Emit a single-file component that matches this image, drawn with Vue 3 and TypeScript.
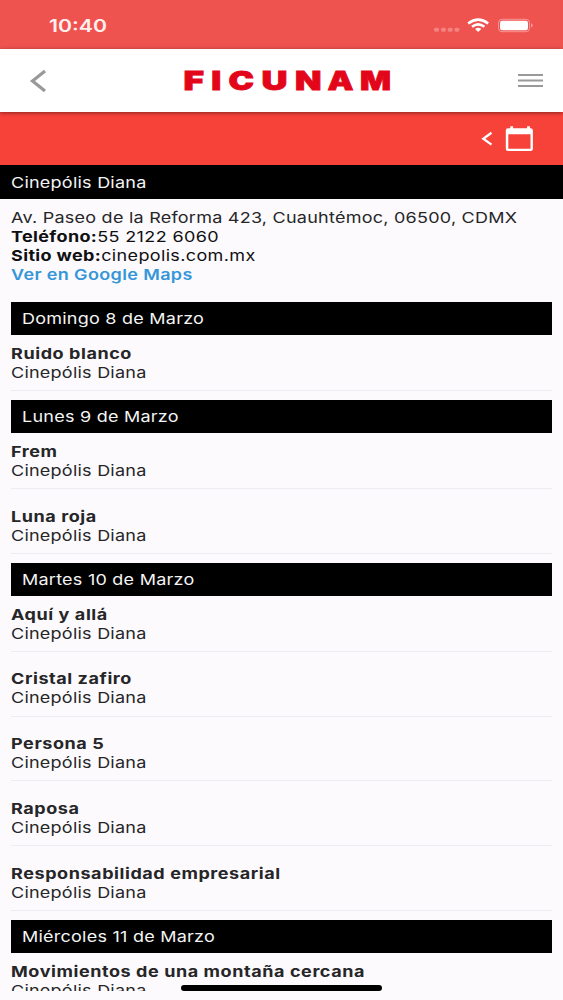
<script setup lang="ts">
interface Day {
  label: string
  films: string[]
}

const venue = 'Cinepólis Diana'

const days: Day[] = [
  { label: 'Domingo 8 de Marzo', films: ['Ruido blanco'] },
  { label: 'Lunes 9 de Marzo', films: ['Frem', 'Luna roja'] },
  {
    label: 'Martes 10 de Marzo',
    films: ['Aquí y allá', 'Cristal zafiro', 'Persona 5', 'Raposa', 'Responsabilidad empresarial'],
  },
  { label: 'Miércoles 11 de Marzo', films: ['Movimientos de una montaña cercana'] },
]

const logo = [
  { char: 'F', x: 0.5, width: 20.5 },
  { char: 'I', x: 28.2, width: 10 },
  { char: 'C', x: 45.5, width: 25.5 },
  { char: 'U', x: 78.5, width: 26 },
  { char: 'N', x: 112, width: 26.5 },
  { char: 'A', x: 144.5, width: 26 },
  { char: 'M', x: 177, width: 31 },
]
</script>

<template>
  <div class="screen">
    <div class="status">
      <span class="clock">10:40</span>
      <svg class="indicators" width="102" height="20" viewBox="0 0 102 20">
        <g fill="#fff" opacity="0.28">
          <rect x="1" y="10.700" width="5" height="4" rx="1.6" />
          <rect x="8" y="10.700" width="5" height="4" rx="1.6" />
          <rect x="14.700" y="10.700" width="5" height="4" rx="1.6" />
          <rect x="21.400" y="10.700" width="5" height="4" rx="1.6" />
        </g>
        <g fill="none" stroke="#fff" stroke-width="2.5">
          <path d="M35.200 6.500 Q45.200 -1.300 55.200 6.500" />
          <path d="M39 9.800 Q45.200 5 51.400 9.800" />
        </g>
        <path d="M42.100 12 Q45.200 9.700 48.300 12 L45.200 15Z" fill="#fff" />
        <rect x="65.500" y="2.300" width="31" height="12.400" rx="3.500" fill="none" stroke="#fff" stroke-opacity="0.4" />
        <rect x="67" y="3.800" width="28" height="9.400" rx="2.200" fill="#fff" />
        <path d="M98.200 6.300 Q101.200 8.400 98.200 10.600Z" fill="#fff" fill-opacity="0.5" />
      </svg>
    </div>

    <header class="header">
      <svg class="back" width="18" height="24" viewBox="0 0 18 24">
        <path d="M17 2 L4.500 12 L17 22" fill="none" stroke="#999" stroke-width="3.2" />
      </svg>
      <svg class="logo" width="216" height="44" viewBox="0 0 216 44" role="img" aria-label="FICUNAM">
        <text
          v-for="letter in logo"
          :key="letter.char"
          :x="letter.x"
          y="31.200"
          :textLength="letter.width"
          lengthAdjust="spacingAndGlyphs"
        >{{ letter.char }}</text>
      </svg>
      <svg class="menu" width="25" height="15" viewBox="0 0 25 15">
        <path d="M0 2H25M0 7.500H25M0 13H25" stroke="#999" stroke-width="1.900" />
      </svg>
    </header>

    <div class="toolbar">
      <svg width="56" height="28" viewBox="0 0 56 28">
        <path d="M12.500 7.800 L4.300 13.700 L12.500 19.600" fill="none" stroke="#fff" stroke-width="2.300" />
        <path
          fill="#fff"
          fill-rule="evenodd"
          d="M31.300 1.200h2.800v2h14v-2h2.800v2h.7q2.300 0 2.300 2.200v18.600q0 2-2.300 2h-22.500q-2.300 0-2.300-2v-18.600q0-2.200 2.300-2.200h2.200zM29.300 9.200v14.600h22.200v-14.600z"
        />
      </svg>
    </div>

    <div class="bar venue-bar"><span class="line">{{ venue }}</span></div>

    <main class="content">
      <section class="details">
        <div class="line">Av. Paseo de la Reforma 423, Cuauhtémoc, 06500, CDMX</div>
        <div class="line dark"><b>Teléfono:</b>55 2122 6060</div>
        <div class="line dark"><b>Sitio web:</b>cinepolis.com.mx</div>
        <div class="line"><a class="map-link">Ver en Google Maps</a></div>
      </section>

      <section v-for="day in days" :key="day.label">
        <h2 class="bar"><span class="line">{{ day.label }}</span></h2>
        <article v-for="film in day.films" :key="film" class="film">
          <div class="line title">{{ film }}</div>
          <div class="line">{{ venue }}</div>
        </article>
      </section>
    </main>

    <div class="home-indicator"></div>
  </div>
</template>

<style>
body {
  margin: 0;
}
</style>

<style scoped>
.screen {
  position: relative;
  display: flex;
  flex-direction: column;
  width: 563px;
  height: 1000px;
  overflow: hidden;
  background: #fcfafd;
  color: #262628;
  font-family: Inter, 'Liberation Sans', sans-serif;
  font-size: 15px;
}

.status {
  display: flex;
  flex: none;
  justify-content: space-between;
  box-sizing: border-box;
  height: 49px;
  padding: 15px 28px 0 49px;
  background: #ef5350;
}

.clock {
  height: 20px;
  color: #fff0ee;
  font-size: 17px;
  font-weight: 600;
  line-height: 23px;
  transform: scaleX(1.25);
  transform-origin: left;
}

.indicators {
  margin-top: 2px;
}

.header {
  z-index: 1;
  display: flex;
  flex: none;
  align-items: center;
  box-sizing: border-box;
  height: 63px;
  padding: 0 20px 0 28px;
  background: #fff;
  box-shadow: 0 1px 4px rgba(0, 0, 0, 0.45);
}

.logo {
  margin-left: 137px;
  fill: #e3061a;
  stroke: #e3061a;
  stroke-width: 0.800px;
  font-size: 26px;
  font-weight: 900;
}

.menu {
  margin-left: auto;
}

.toolbar {
  display: flex;
  flex: none;
  align-items: center;
  justify-content: flex-end;
  box-sizing: border-box;
  height: 53.300px;
  padding-right: 28px;
  background: #f7423a;
}

.bar {
  display: flex;
  flex: none;
  align-items: center;
  box-sizing: border-box;
  height: 33.300px;
  margin: 0;
  padding: 0.700px 0 0 11px;
  background: #000;
  color: #f4f4f4;
  font-size: 15px;
  font-weight: 400;
}

.content {
  flex: none;
  height: 792.200px;
  padding: 0 11.300px;
  overflow: hidden;
}

.details {
  box-sizing: border-box;
  height: 103.200px;
  padding-top: 9px;
}

.line {
  display: block;
  width: max-content;
  line-height: 19px;
  letter-spacing: 0.200px;
  white-space: nowrap;
  transform: scaleX(1.2);
  transform-origin: left;
}

.dark {
  color: #101012;
  letter-spacing: 0.300px;
}

.map-link {
  color: #3596d8;
  font-weight: 600;
  letter-spacing: 0.300px;
}

b {
  font-weight: 700;
}

.title {
  font-weight: 700;
  letter-spacing: 0.480px;
}

.film {
  margin-bottom: 8.750px;
  padding: 8.700px 0 8.300px;
  border-bottom: 1px solid #eeecf0;
}

.home-indicator {
  position: absolute;
  bottom: 9px;
  left: 181px;
  width: 201px;
  height: 6px;
  border-radius: 3px;
  background: #000;
}
</style>
